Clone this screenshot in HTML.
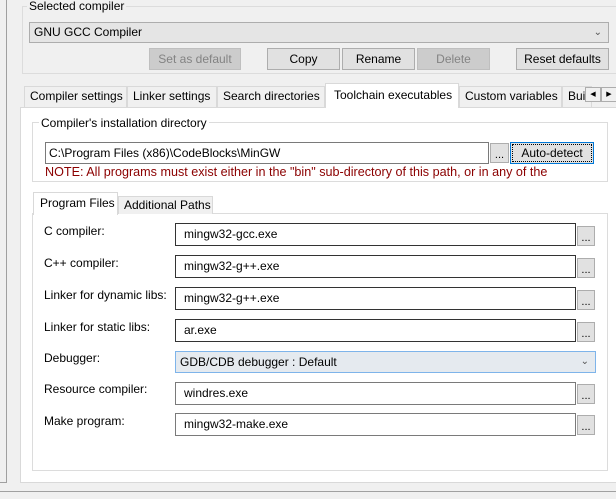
<!DOCTYPE html>
<html><head><style>
*{box-sizing:border-box;margin:0;padding:0}
body{width:616px;height:499px;background:#f0f0f0;position:relative;overflow:hidden;font-family:"Liberation Sans",sans-serif;font-size:12px;color:#000}
.a{position:absolute}
.btn{position:absolute;background:#e1e1e1;border:1px solid #adadad;text-align:center;line-height:20px}
.dis{background:#cccccc;border-color:#bfbfbf;color:#838383}
.tab{position:absolute;top:86px;height:21px;border:1px solid #d9d9d9;border-bottom:none;background:#f0f0f0;line-height:19px;padding-left:5px;white-space:nowrap;overflow:hidden}
.inp{position:absolute;left:175px;width:401px;height:23px;background:#fff;border:1px solid #333;line-height:21px;padding-left:8px}
.el{position:absolute;left:577px;width:18px;height:20px;background:#e1e1e1;border:1px solid #adadad;text-align:center;line-height:22px;font-size:11px}
.lbl{position:absolute;left:44px}
</style></head><body>
<div class="a" style="left:6px;top:0;width:1px;height:482px;background:#a0a0a0"></div>
<div class="a" style="left:0;top:482px;width:7px;height:1px;background:#a0a0a0"></div>
<div class="a" style="left:0;top:491px;width:616px;height:1px;background:#a0a0a0"></div>
<div class="a" style="left:22px;top:6px;width:600px;height:68px;border:1px solid #dcdcdc"></div>
<div class="a" style="left:27px;top:-1px;background:#f0f0f0;padding:0 2px">Selected compiler</div>
<div class="a" style="left:29px;top:22px;width:580px;height:21px;background:#e5e5e5;border:1px solid #adadad;line-height:19px;padding-left:4px">GNU GCC Compiler<span style="position:absolute;right:6px;top:0;color:#555;font-size:10px">&#8964;</span></div>
<div class="btn dis" style="left:149px;top:48px;width:92px;height:22px">Set as default</div>
<div class="btn" style="left:267px;top:48px;width:73px;height:22px">Copy</div>
<div class="btn" style="left:342px;top:48px;width:73px;height:22px">Rename</div>
<div class="btn dis" style="left:417px;top:48px;width:73px;height:22px">Delete</div>
<div class="btn" style="left:516px;top:48px;width:93px;height:22px">Reset defaults</div>
<div class="a" style="left:20px;top:107px;width:600px;height:376px;background:#fff;border:1px solid #d9d9d9"></div>
<div class="tab" style="left:24px;width:103px">Compiler settings</div>
<div class="tab" style="left:127px;width:90px">Linker settings</div>
<div class="tab" style="left:217px;width:108px">Search directories</div>
<div class="tab" style="left:325px;top:83px;height:25px;width:134px;background:#fff;line-height:22px;padding-left:8px">Toolchain executables</div>
<div class="tab" style="left:459px;width:103px">Custom variables</div>
<div class="tab" style="left:562px;width:30px">Build</div>
<div class="a" style="left:585px;top:87px;width:16px;height:15px;background:#f0f0f0;border:1px solid #adadad;font-size:7px;text-align:center;line-height:13px">&#9664;</div>
<div class="a" style="left:601px;top:87px;width:16px;height:15px;background:#f0f0f0;border:1px solid #adadad;font-size:7px;text-align:center;line-height:13px">&#9654;</div>
<div class="a" style="left:32px;top:122px;width:576px;height:60px;border:1px solid #dcdcdc"></div>
<div class="a" style="left:39px;top:116px;background:#fff;padding:0 2px">Compiler's installation directory</div>
<div class="a" style="left:45px;top:142px;width:444px;height:22px;border:1px solid #7a7a7a;background:#fff;line-height:20px;padding-left:3px">C:\Program Files (x86)\CodeBlocks\MinGW</div>
<div class="btn" style="left:490px;top:143px;width:19px;height:20px;line-height:22px;font-size:11px">...</div>
<div class="btn" style="left:510px;top:142px;width:84px;height:22px;border:1px solid #0078d7;outline:1px dotted #000;outline-offset:-3px">Auto-detect</div>
<div class="a" style="left:45px;top:165px;color:#8b0000;font-size:12.6px;white-space:nowrap">NOTE: All programs must exist either in the "bin" sub-directory of this path, or in any of the</div>
<div class="a" style="left:32px;top:213px;width:576px;height:258px;border:1px solid #dcdcdc;background:#fff"></div>
<div class="a" style="left:118px;top:196px;width:95px;height:18px;border:1px solid #d9d9d9;border-bottom:none;background:#f0f0f0;line-height:17px;padding-left:5px">Additional Paths</div>
<div class="a" style="left:33px;top:192px;width:85px;height:23px;border:1px solid #d9d9d9;border-bottom:none;background:#fff;line-height:20px;padding-left:6px">Program Files</div>
<div class="lbl" style="top:224px">C compiler:</div>
<div class="inp" style="top:223px">mingw32-gcc.exe</div><div class="el" style="top:226px">...</div>
<div class="lbl" style="top:256px">C++ compiler:</div>
<div class="inp" style="top:255px">mingw32-g++.exe</div><div class="el" style="top:258px">...</div>
<div class="lbl" style="top:288px">Linker for dynamic libs:</div>
<div class="inp" style="top:287px">mingw32-g++.exe</div><div class="el" style="top:290px">...</div>
<div class="lbl" style="top:320px">Linker for static libs:</div>
<div class="inp" style="top:319px">ar.exe</div><div class="el" style="top:322px">...</div>
<div class="lbl" style="top:351px">Debugger:</div>
<div class="a" style="left:175px;top:351px;width:421px;height:22px;background:#e5eaef;border:1px solid #7eb4ea;line-height:20px;padding-left:4px">GDB/CDB debugger : Default<span style="position:absolute;right:6px;top:0;color:#555;font-size:10px">&#8964;</span></div>
<div class="lbl" style="top:382px">Resource compiler:</div>
<div class="inp" style="top:382px;border-color:#7a7a7a">windres.exe</div><div class="el" style="top:384px">...</div>
<div class="lbl" style="top:414px">Make program:</div>
<div class="inp" style="top:413px;border-color:#7a7a7a">mingw32-make.exe</div><div class="el" style="top:415px">...</div>
</body></html>
